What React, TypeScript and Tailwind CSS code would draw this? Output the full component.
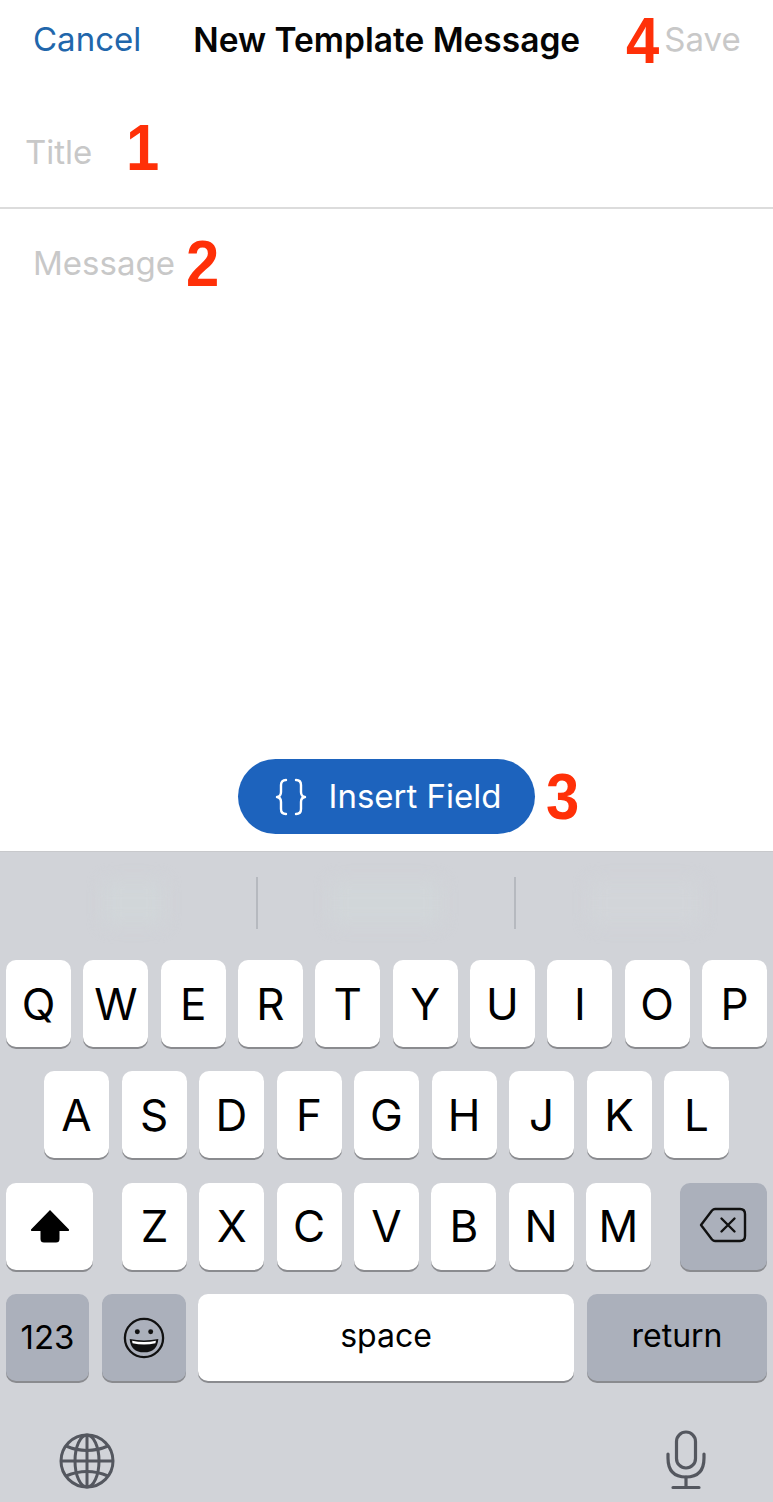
import type { ReactNode } from "react";

const ROW_1 = ["Q", "W", "E", "R", "T", "Y", "U", "I", "O", "P"];
const ROW_2 = ["A", "S", "D", "F", "G", "H", "J", "K", "L"];
const ROW_3 = ["Z", "X", "C", "V", "B", "N", "M"];

function Marker({ children, className }: { children: ReactNode; className?: string }) {
  return (
    <span
      className={`inline-block origin-left scale-x-[0.92] font-['Liberation_Sans',sans-serif] text-[65px] font-bold leading-none text-[#ff3008] ${className ?? ""}`}
    >
      {children}
    </span>
  );
}

function Key({
  children,
  dark,
  className,
}: {
  children: ReactNode;
  dark?: boolean;
  className?: string;
}) {
  return (
    <div
      className={`flex h-[87px] items-center justify-center rounded-[10px] leading-none font-[380] text-black shadow-[0_2px_0_#8a8b8f] ${
        dark ? "bg-[#abb0bb]" : "bg-white"
      } ${className ?? "w-[65px] text-[44px]"}`}
    >
      {children}
    </div>
  );
}

function BracesIcon() {
  return (
    <svg width="32" height="38" viewBox="0 0 32 38" fill="none" stroke="#fff" strokeWidth="2.4" strokeLinecap="round" strokeLinejoin="round">
      <path d="M11 2 Q6 2 6 7 V14 Q6 18.5 2 19 Q6 19.5 6 24 V31 Q6 36 11 36" />
      <path d="M21 2 Q26 2 26 7 V14 Q26 18.5 30 19 Q26 19.5 26 24 V31 Q26 36 21 36" />
    </svg>
  );
}

function ShiftIcon() {
  return (
    <svg width="40" height="34" viewBox="0 0 40 34" fill="#000">
      <path d="M20 1 L39 20.5 Q39.5 22 38 22 L29.5 22 L29.5 30 Q29.5 33.5 26 33.5 L14 33.5 Q10.5 33.5 10.5 30 L10.5 22 L2 22 Q0.5 22 1 20.5 Z" />
    </svg>
  );
}

function DeleteIcon() {
  return (
    <svg className="-mt-[3px] -ml-[2px]" width="48" height="36" viewBox="0 0 48 36" fill="none" stroke="#111" strokeWidth="2.4" strokeLinejoin="round" strokeLinecap="round">
      <path d="M16 2 H41 Q46 2 46 7 V29 Q46 34 41 34 H16 Q14.5 34 13 32.5 L2 18 L13 3.5 Q14.5 2 16 2 Z" />
      <path d="M22.5 11.5 L35.5 24.5 M35.5 11.5 L22.5 24.5" />
    </svg>
  );
}

function EmojiIcon() {
  return (
    <svg width="42" height="42" viewBox="0 0 44 44" fill="none">
      <circle cx="22" cy="22" r="20" stroke="#111" strokeWidth="2.4" />
      <circle cx="15" cy="15.5" r="2.6" fill="#111" />
      <circle cx="29" cy="15.5" r="2.6" fill="#111" />
      <path d="M7 23 Q22 26 37 23 Q36 37 22 37 Q8 37 7 23 Z" fill="#111" />
      <path d="M9.5 25 Q22 27.5 34.5 25 L34 27.5 Q22 30 10 27.5 Z" fill="#fff" />
    </svg>
  );
}

function GlobeIcon() {
  return (
    <svg width="56" height="56" viewBox="0 0 56 56" fill="none" stroke="#54575f" strokeWidth="3">
      <circle cx="28" cy="28" r="26" />
      <ellipse cx="28" cy="28" rx="12" ry="26" />
      <path d="M28 2 V54 M2 28 H54" />
      <path d="M7 13 Q28 22 49 13 M7 43 Q28 34 49 43" />
    </svg>
  );
}

function MicIcon() {
  return (
    <svg width="40" height="60" viewBox="0 0 40 60" fill="none" stroke="#54575f" strokeWidth="3.2" strokeLinecap="round">
      <rect x="10.5" y="2" width="19" height="36" rx="9.5" />
      <path d="M2 24 V28 Q2 47 20 47 Q38 47 38 28 V24" />
      <path d="M20 47 V57 M7 57.5 H33" />
    </svg>
  );
}

export default function App() {
  return (
    <div className="flex h-[1502px] w-[773px] flex-col overflow-hidden bg-white font-['Inter',sans-serif]">
      <header className="flex h-[80px] items-center pl-[33px] text-[33px]">
        <span className="text-[#2166ab]">Cancel</span>
        <span className="ml-[52px] text-[33.5px] font-semibold text-[#050505]">New Template Message</span>
        <Marker className="ml-[46px]">4</Marker>
        <span className="ml-[2px] text-[#c8c8c8]">Save</span>
      </header>

      <div className="flex h-[129px] items-center border-b-2 border-[#dcdcdc] pl-[25px] pt-[18px]">
        <span className="text-[33px] text-[#c8c8c8]">Title</span>
        <Marker className="mb-[11px] ml-[34px]">1</Marker>
      </div>

      <div className="flex h-[642px] flex-col px-[33px]">
        <div className="mt-[22px] flex items-center">
          <span className="text-[33px] text-[#c8c8c8]">Message</span>
          <Marker className="ml-[11px]">2</Marker>
        </div>
        <div className="mt-auto mb-[17px] ml-[205px] flex items-center">
          <button className="flex h-[75px] w-[297px] items-center justify-center gap-[22px] rounded-full bg-[#1d63bd] pl-[3px] text-[33px] text-white">
            <BracesIcon />
            <span>Insert Field</span>
          </button>
          <Marker className="ml-[11px]">3</Marker>
        </div>
      </div>

      <div className="flex flex-1 flex-col bg-[#d1d3d8] shadow-[inset_0_1px_0_#c8c9cc]">
        <div className="flex h-[109px] items-center pb-[5px]">
          <div className="flex w-[256px] justify-center">
            <div className="ml-[12px] h-[44px] w-[60px] rounded-md bg-[#d1d6d9] blur-[8px]" />
          </div>
          <div className="h-[52px] w-[2px] bg-[#b6b9bf]" />
          <div className="flex w-[256px] justify-center">
            <div className="h-[44px] w-[110px] rounded-md bg-[#d1d6d9] blur-[8px]" />
          </div>
          <div className="h-[52px] w-[2px] bg-[#b6b9bf]" />
          <div className="flex flex-1 justify-center">
            <div className="h-[44px] w-[110px] rounded-md bg-[#d2d5d9] blur-[8px]" />
          </div>
        </div>

        <div className="flex flex-col gap-[24.4px]">
          <div className="flex justify-between px-[6px]">
            {ROW_1.map((k) => (
              <Key key={k}>{k}</Key>
            ))}
          </div>
          <div className="flex justify-between px-[44px]">
            {ROW_2.map((k) => (
              <Key key={k}>{k}</Key>
            ))}
          </div>
          <div className="flex px-[6px]">
            <Key className="w-[87px]">
              <ShiftIcon />
            </Key>
            <div className="ml-[29px] flex w-[529px] justify-between">
              {ROW_3.map((k) => (
                <Key key={k}>{k}</Key>
              ))}
            </div>
            <Key dark className="ml-[29px] w-[87px]">
              <DeleteIcon />
            </Key>
          </div>
          <div className="flex px-[6px]">
            <Key dark className="w-[83px] text-[33px]">123</Key>
            <Key dark className="ml-[13px] w-[84px]">
              <EmojiIcon />
            </Key>
            <Key className="ml-[12px] w-[376px] pb-[4px] text-[32px]">space</Key>
            <Key dark className="ml-[13px] w-[180px] pb-[4px] text-[32px]">return</Key>
          </div>
        </div>

        <div className="mt-[26px] flex items-start justify-between pl-[59px] pr-[67px] pt-[26px]">
          <GlobeIcon />
          <div className="-mt-[3px]">
            <MicIcon />
          </div>
        </div>
      </div>
    </div>
  );
}
